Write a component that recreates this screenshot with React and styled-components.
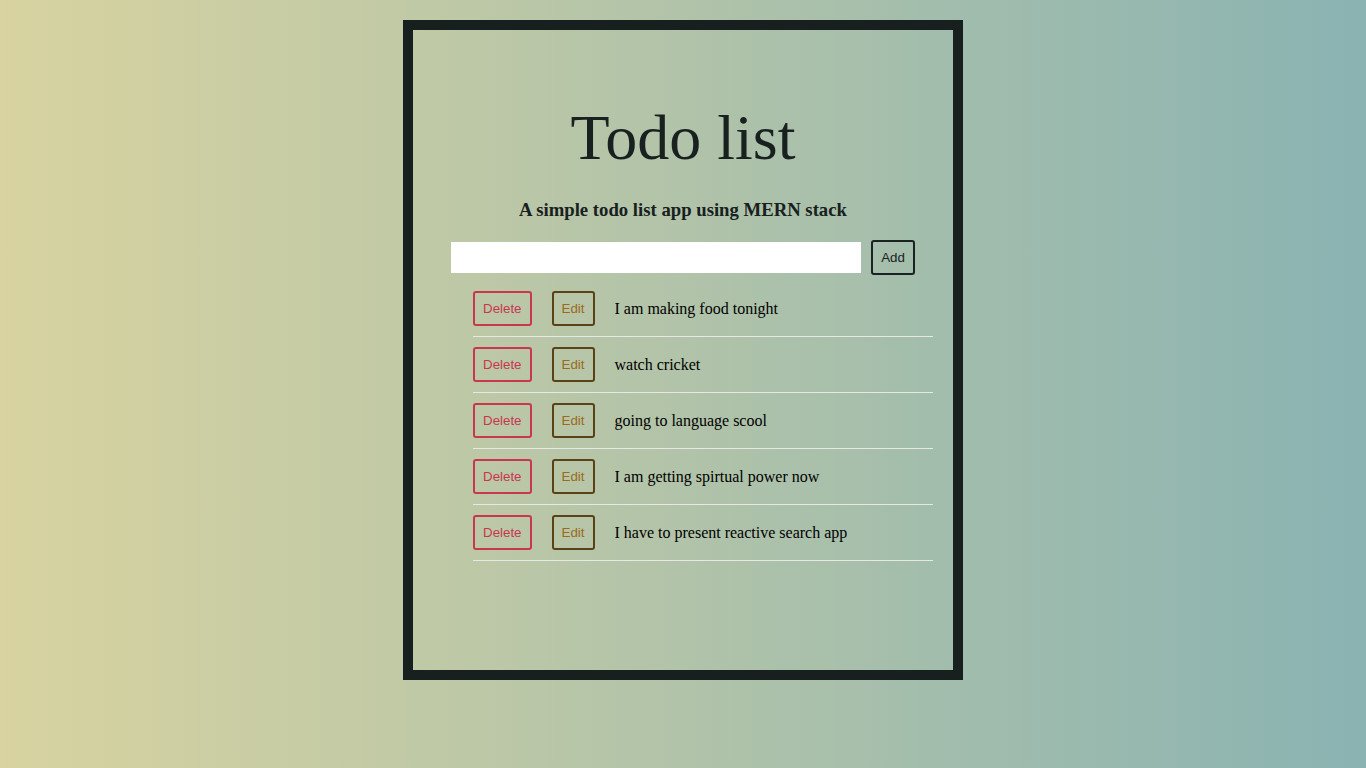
import React, { useState } from 'react';
import styled, { createGlobalStyle } from 'styled-components';

const GlobalStyle = createGlobalStyle`
  html, body {
    margin: 0;
    padding: 0;
  }
  body {
    min-height: 100vh;
    background: linear-gradient(to right, #d8d3a0, #8ab3b2);
    font-family: "Liberation Serif", "Times New Roman", serif;
  }
`;

const Page = styled.div`
  display: flex;
  justify-content: center;
  padding-top: 20px;
  min-height: 100vh;
  box-sizing: border-box;
`;

const Card = styled.div`
  width: 560px;
  height: 660px;
  box-sizing: border-box;
  border: 10px solid #181f1f;
  padding: 71px 20px 20px;
`;

const Title = styled.h1`
  margin: 0;
  text-align: center;
  font-size: 64px;
  font-weight: normal;
  color: #182020;
`;

const Subtitle = styled.h3`
  margin: 24px 0 0;
  text-align: center;
  font-size: 18.72px;
  font-weight: bold;
  color: #182020;
`;

const Form = styled.form`
  display: flex;
  justify-content: center;
  align-items: center;
  gap: 10px;
  margin-top: 19px;
`;

const Input = styled.input`
  width: 410px;
  height: 31px;
  box-sizing: border-box;
  border: none;
  outline: none;
  background: #fff;
  padding: 0 6px;
  font-family: "Liberation Sans", Arial, sans-serif;
  font-size: 13.33px;
`;

const Button = styled.button`
  box-sizing: border-box;
  height: 35px;
  padding: 8px;
  background: transparent;
  border: 2px solid ${(p) => p.$border};
  border-radius: 3px;
  color: ${(p) => p.$color};
  font-family: "Liberation Sans", Arial, sans-serif;
  font-size: 13.33px;
  line-height: 15px;
  cursor: pointer;
`;

const List = styled.ul`
  list-style: none;
  margin: 6px 0 0;
  padding: 0 0 0 40px;
`;

const Row = styled.li`
  display: flex;
  align-items: center;
  gap: 20px;
  padding: 10px 0;
  border-bottom: 1px solid #e6e9e2;
`;

const Text = styled.span`
  font-size: 16px;
  color: #000;
`;

const initial = [
  'I am making food tonight',
  'watch cricket',
  'going to language scool',
  'I am getting spirtual power now',
  'I have to present reactive search app',
];

export default function App() {
  const [todos, setTodos] = useState(initial);
  const [value, setValue] = useState('');

  const add = (e) => {
    e.preventDefault();
    if (!value.trim()) return;
    setTodos([...todos, value]);
    setValue('');
  };

  return (
    <>
      <GlobalStyle />
      <Page>
        <Card>
          <Title>Todo list</Title>
          <Subtitle>A simple todo list app using MERN stack</Subtitle>
          <Form onSubmit={add}>
            <Input value={value} onChange={(e) => setValue(e.target.value)} />
            <Button type="submit" $border="#1b2222" $color="#1b2222">Add</Button>
          </Form>
          <List>
            {todos.map((t, i) => (
              <Row key={i}>
                <Button
                  $border="#c8374f"
                  $color="#c8374f"
                  onClick={() => setTodos(todos.filter((_, j) => j !== i))}
                >
                  Delete
                </Button>
                <Button $border="#5a4116" $color="#9a6a20">Edit</Button>
                <Text>{t}</Text>
              </Row>
            ))}
          </List>
        </Card>
      </Page>
    </>
  );
}
